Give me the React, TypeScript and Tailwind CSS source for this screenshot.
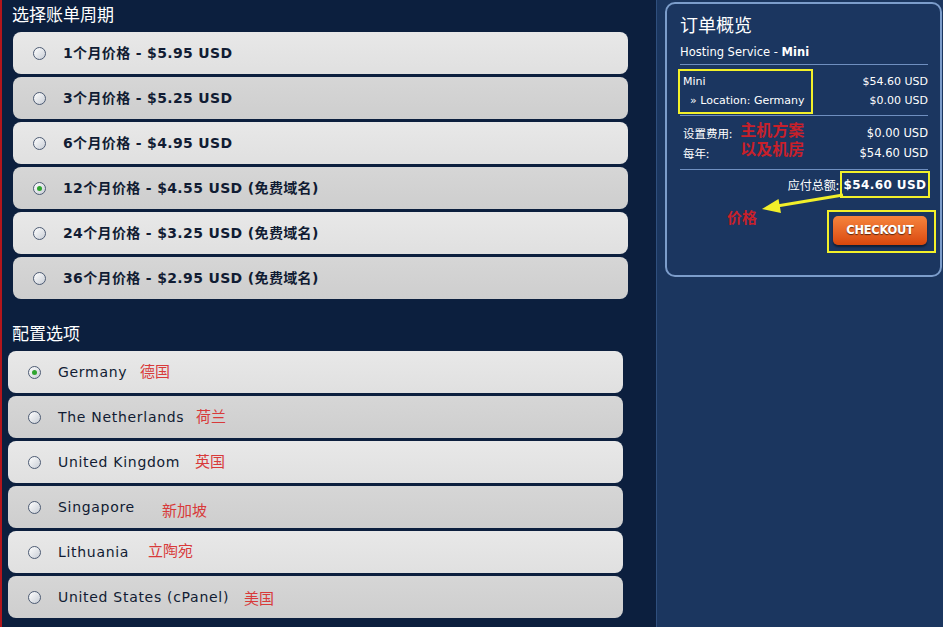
import React from "react";

const cycles = [
  { label: "1个月价格 - $5.95 USD", light: true },
  { label: "3个月价格 - $5.25 USD", light: false },
  { label: "6个月价格 - $4.95 USD", light: true },
  { label: "12个月价格 - $4.55 USD (免费域名)", light: false, checked: true },
  { label: "24个月价格 - $3.25 USD (免费域名)", light: true },
  { label: "36个月价格 - $2.95 USD (免费域名)", light: false },
];

const locations = [
  { label: "Germany", note: "德国", light: true, checked: true, pos: "left-[132px] top-[9px]" },
  { label: "The Netherlands", note: "荷兰", light: false, pos: "left-[188px] top-[9px]" },
  { label: "United Kingdom", note: "英国", light: true, pos: "left-[187px] top-[9px]" },
  { label: "Singapore", note: "新加坡", light: false, pos: "left-[154px] top-[13px]" },
  { label: "Lithuania", note: "立陶宛", light: true, pos: "left-[140px] top-[8px]" },
  { label: "United States (cPanel)", note: "美国", light: false, pos: "left-[236px] top-[11px]" },
];

const Radio = ({ checked }: { checked?: boolean }) => (
  <span className="w-[13px] h-[13px] shrink-0 rounded-full border border-[#4d5b73] bg-gradient-to-br from-white to-[#c9ced6] grid place-items-center">
    {checked && <span className="w-[5px] h-[5px] rounded-full bg-[#2fa52f]" />}
  </span>
);

const Row = ({
  light,
  checked,
  children,
  bold,
}: {
  light: boolean;
  checked?: boolean;
  bold?: boolean;
  children: React.ReactNode;
}) => (
  <div
    className={`relative h-[42px] w-[615px] rounded-[8px] flex items-center pl-[20px] gap-[17px] text-[#111c33] text-[14px] ${
      bold ? "font-bold tracking-[0.35px]" : "font-normal tracking-[0.7px]"
    } ${
      light
        ? "bg-gradient-to-b from-[#e8e8e8] to-[#e0e0e0]"
        : "bg-gradient-to-b from-[#d6d6d6] to-[#cecece]"
    }`}
  >
    <Radio checked={checked} />
    {children}
  </div>
);

const App = () => {
  return (
    <div
      className="w-[943px] h-[627px] flex overflow-hidden"
      style={{ fontFamily: '"DejaVu Sans", "Noto Sans CJK SC", sans-serif' }}
    >
      {/* left column */}
      <div className="w-[656px] h-full shrink-0 bg-[#0c1f3e] border-l-2 border-[#b3161c]">
        <div className="pl-[10px] h-[32px] pt-[3px] text-white text-[17px] leading-[22px] font-['Noto_Sans_CJK_SC',sans-serif]">
          选择账单周期
        </div>
        <div className="pl-[11px] flex flex-col gap-[3px]">
          {cycles.map((c) => (
            <Row key={c.label} light={c.light} checked={c.checked} bold>
              <span>{c.label}</span>
            </Row>
          ))}
        </div>
        <div className="pl-[10px] h-[52px] flex items-end pb-[7px] text-white text-[17px] leading-[22px] font-['Noto_Sans_CJK_SC',sans-serif]">
          配置选项
        </div>
        <div className="pl-[6px] flex flex-col gap-[3px]">
          {locations.map((l) => (
            <Row key={l.label} light={l.light} checked={l.checked}>
              <span>{l.label}</span>
              <span
                className={`absolute ${l.pos} text-[15px] leading-[22px] tracking-normal text-[#d83a3a] font-['Noto_Sans_CJK_SC',sans-serif]`}
              >
                {l.note}
              </span>
            </Row>
          ))}
        </div>
      </div>

      {/* right column */}
      <div className="flex-1 h-full bg-[#1b365f] border-l border-[#2f4f7e] pl-[8px] pt-[2px]">
        <div className="w-[277px] border-2 border-[#7c9dcb] rounded-[10px] bg-[#1b3660] text-white">
          <div className="relative pl-[13px] pr-[12px] pt-[8px] pb-[22px]">
            <div className="text-[18px] leading-[24px] font-['Noto_Sans_CJK_SC',sans-serif]">订单概览</div>
            <div className="mt-[8px] text-[11.5px] leading-[16px]">
              Hosting Service - <span className="font-bold">Mini</span>
            </div>
            <div className="mt-[4px] h-px bg-[#6f8fc0]" />

            <div className="relative mt-[7px] text-[11px] leading-[19px]">
              <div className="flex justify-between pl-[3px]">
                <span>Mini</span>
                <span>$54.60 USD</span>
              </div>
              <div className="flex justify-between pl-[10px]">
                <span>» Location: Germany</span>
                <span>$0.00 USD</span>
              </div>
              <div className="absolute -left-[2px] -top-[3px] w-[135px] h-[45px] border-2 border-[#f2f02a]" />
            </div>
            <div className="mt-[5px] h-px bg-[#6f8fc0]" />

            <div className="mt-[7px] grid grid-cols-[auto_1fr_auto] text-[11.5px] leading-[20px] pl-[3px]">
              <span className="col-start-1 row-start-1 font-['Noto_Sans_CJK_SC',sans-serif]">设置费用:</span>
              <span className="col-start-1 row-start-2 font-['Noto_Sans_CJK_SC',sans-serif]">每年:</span>
              <div className="col-start-2 row-start-1 row-span-2 self-start -mt-[2px] pl-[8px] text-[16px] leading-[19px] font-bold text-[#c8202a] font-['Liberation_Serif','Noto_Sans_CJK_SC',serif]">
                主机方案
                <br />
                以及机房
              </div>
              <span className="col-start-3 row-start-1 text-right">$0.00 USD</span>
              <span className="col-start-3 row-start-2 text-right">$54.60 USD</span>
            </div>
            <div className="mt-[6px] h-px bg-[#6f8fc0]" />

            <div className="mt-[1px] flex justify-end items-center -mr-[2px]">
              <span className="text-[12px] font-['Noto_Sans_CJK_SC',sans-serif] mr-[1px]">应付总额:</span>
              <span className="w-[90px] h-[27px] border-2 border-[#f2f02a] flex items-center justify-center text-[12px] font-bold tracking-[0.4px]">
                $54.60 USD
              </span>
            </div>

            <div className="mt-[12px] flex justify-end -mr-[8px]">
              <div className="border-2 border-[#f2f02a] pl-[4px] pr-[7px] pt-[4px] pb-[6px]">
                <button className="w-[94px] h-[29px] rounded-[5px] bg-gradient-to-b from-[#f6843c] to-[#d9470b] shadow-[0_2px_2px_rgba(0,0,0,0.45)] text-white text-[11.5px] font-bold tracking-[-0.3px] [text-shadow:0_1px_1px_rgba(0,0,0,0.6)]">
                  CHECKOUT
                </button>
              </div>
            </div>

            {/* red annotation + arrow pointing at the total */}
            <div className="absolute left-[60px] top-[205px] text-[15px] leading-[18px] font-bold text-[#c8202a] font-['Liberation_Serif','Noto_Sans_CJK_SC',serif]">
              价格
            </div>
            <svg className="absolute left-[90px] top-[183px]" width="90" height="30" viewBox="0 0 90 30">
              <line x1="20" y1="19" x2="86" y2="8" stroke="#f2ef2a" strokeWidth="3" />
              <polygon points="5,22 24,26 21.5,12" fill="#f2ef2a" />
            </svg>
          </div>
        </div>
      </div>
    </div>
  );
};

export default App;
